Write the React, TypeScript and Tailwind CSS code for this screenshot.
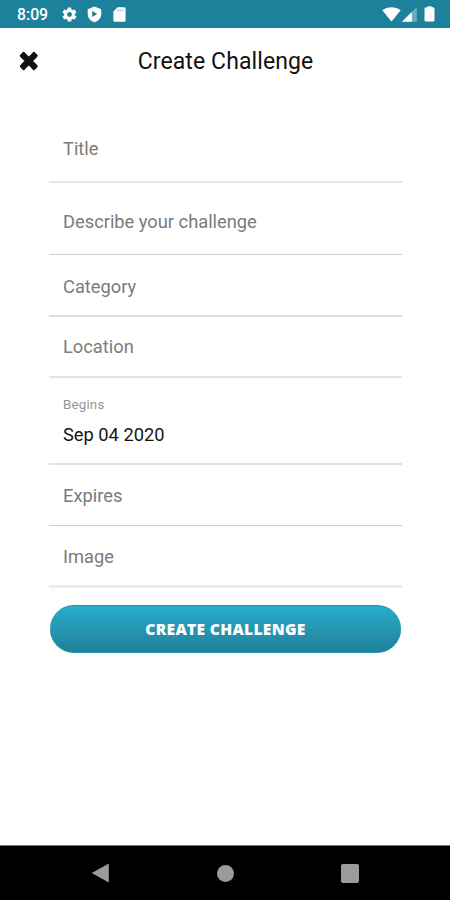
import clsx from "clsx";

type Field = {
  label: string;
  value?: string;
  row: string;
};

const fields: Field[] = [
  { label: "Title", row: "h-[88px] pt-[43px] border-b-2 border-[#e6e6e6]" },
  { label: "Describe your challenge", row: "h-[72px] pt-[28px] border-b border-[#cfcfcf]" },
  { label: "Category", row: "h-[62px] pt-[21px] border-b-2 border-[#dedede]" },
  { label: "Location", row: "h-[61px] pt-[19px] border-b-2 border-[#e4e4e4]" },
  { label: "Begins", value: "Sep 04 2020", row: "h-[87px] pt-[18px] border-b-2 border-[#e2e2e2]" },
  { label: "Expires", row: "h-[61px] pt-[20px] border-b border-[#cfcfcf]" },
  { label: "Image", row: "h-[62px] pt-[20px] border-b-3 border-[#ececec]" },
];

function StatusBar() {
  return (
    <header className="flex h-7 shrink-0 items-center bg-[#1e819b] pl-[17px] pr-[15px] text-white">
      <span className="w-[45px] pt-px text-[15.8px] font-medium leading-7">8:09</span>
      <svg className="-ml-px h-[17px] w-[17px]" viewBox="0 0 24 24" fill="currentColor">
        <path d="M19.4 13a7.8 7.8 0 0 0 0-2l2.1-1.6a.5.5 0 0 0 .1-.7l-2-3.4a.5.5 0 0 0-.6-.2l-2.5 1a7.3 7.3 0 0 0-1.7-1l-.4-2.6a.5.5 0 0 0-.5-.5h-4a.5.5 0 0 0-.5.5L9 5.100a7.300 7.300 0 0 0-1.700 1l-2.500-1a.5.5 0 0 0-.6.2l-2 3.400a.5.5 0 0 0 .1.7L4.500 11a7.800 7.800 0 0 0 0 2l-2.200 1.600a.5.5 0 0 0-.1.7l2 3.400c.1.2.4.3.6.2l2.500-1a7.300 7.300 0 0 0 1.700 1l.4 2.600c0 .3.2.5.5.5h4c.3 0 .5-.2.5-.5l.4-2.600a7.300 7.300 0 0 0 1.700-1l2.500 1c.2.1.5 0 .6-.2l2-3.400a.5.5 0 0 0-.1-.7zM12 15.500a3.500 3.500 0 1 1 0-7 3.500 3.500 0 0 1 0 7z" fillRule="evenodd" />
      </svg>
      <svg className="ml-[9px] mt-px h-[17px] w-[15px]" viewBox="0 0 15 17" fill="currentColor">
        <path d="M7.500.5 14.300 3.200V8c0 4-2.900 7-6.800 8.300C3.600 15 .7 12 .7 8V3.200zM5.200 5v6L10.300 8z" fillRule="evenodd" />
      </svg>
      <svg className="ml-[11px] mt-px h-[15px] w-[13px]" viewBox="0 0 13 15" fill="currentColor">
        <path d="M4.700.3h6.600a1.300 1.300 0 0 1 1.300 1.300v11.800a1.300 1.300 0 0 1-1.300 1.300H1.700A1.300 1.300 0 0 1 .4 13.400V4.600z" />
        <path d="M4.800 2.500v2M7 2.500v2M9.200 2.500v2" stroke="#1e819b" strokeWidth="1" opacity=".6" />
      </svg>
      <div className="ml-auto flex items-center">
        <svg className="h-[15px] w-[19px]" viewBox="0 0 19 15" fill="currentColor">
          <path d="M.3 3.200C5.500-.8 13.500-.8 18.700 3.200L9.500 14.500z" />
        </svg>
        <svg className="ml-px h-[15px] w-[15px]" viewBox="0 0 15 15" fill="currentColor">
          <path d="M0 14.800 14.800 0v14.800z" opacity=".35" />
          <path d="M0 14.800 9.800 5v9.800z" />
        </svg>
        <svg className="ml-[7px] h-[16px] w-[11px]" viewBox="0 0 11 16" fill="currentColor">
          <path d="M3.500.3h4V1.300h1.500a1.500 1.500 0 0 1 1.500 1.500v11.200a1.500 1.500 0 0 1-1.500 1.500H2A1.500 1.500 0 0 1 .5 14V2.800A1.500 1.500 0 0 1 2 1.300h1.500z" />
        </svg>
      </div>
    </header>
  );
}

function TitleBar() {
  return (
    <div className="grid h-[67px] shrink-0 grid-cols-[1fr_auto_1fr] items-center">
      <button aria-label="Close" className="ml-[19px] w-5">
        <svg className="-mt-px h-[20px] w-[20px]" viewBox="0 0 20 20" fill="none" stroke="#111">
          <path d="M4 4.300 15.500 15.700M15.500 4.300 4 15.700" strokeWidth="6.200" />
          <path d="M2.300 4.800 4.700 2.400M14.800 17.600 17.200 15.200M14.800 2.400 17.200 4.800M2.300 15.200 4.700 17.600" strokeWidth="3" strokeLinecap="round" />
        </svg>
      </button>
      <h1 className="ml-px text-[23px] leading-[26px] tracking-[0.1px] text-[#111]">Create Challenge</h1>
    </div>
  );
}

function FormField({ field }: { field: Field }) {
  return (
    <div className={clsx("pl-[14px] text-[18.3px] leading-[22px]", field.row)}>
      {field.value ? (
        <>
          <div className="text-[13.3px] leading-[18px] tracking-[0.2px] text-[#959595]">{field.label}</div>
          <div className="mt-[10px] text-[#151515]">{field.value}</div>
        </>
      ) : (
        <div className="text-[#7b7b7b]">{field.label}</div>
      )}
    </div>
  );
}

function NavBar() {
  return (
    <nav className="mt-auto flex h-[55px] shrink-0 items-center justify-between border-t border-[#777] bg-black px-[91px] text-[#9b9b9b]">
      <svg className="h-5 w-[18px]" viewBox="0 0 18 20" fill="currentColor">
        <path d="M17.800.5v19L.7 10z" />
      </svg>
      <div className="ml-px h-[17px] w-[17px] rounded-full bg-[#9b9b9b]" />
      <div className="h-[19px] w-[18px] rounded-[2px] bg-[#9b9b9b]" />
    </nav>
  );
}

export default function App() {
  return (
    <div className="flex h-[900px] w-[450px] flex-col overflow-hidden bg-white font-['Roboto',sans-serif]">
      <StatusBar />
      <TitleBar />
      <main className="ml-[49px] w-[353px]">
        {fields.map((field) => (
          <FormField key={field.label} field={field} />
        ))}
        <button className="ml-px mt-[17px] h-12 w-[351px] rounded-full border-y border-[#2093ad] bg-linear-to-b from-[#29adcb] to-[#20819a] pt-[2px] font-['Open_Sans',sans-serif] text-[15.6px] font-extrabold tracking-[0.3px] text-white">
          CREATE CHALLENGE
        </button>
      </main>
      <NavBar />
    </div>
  );
}
